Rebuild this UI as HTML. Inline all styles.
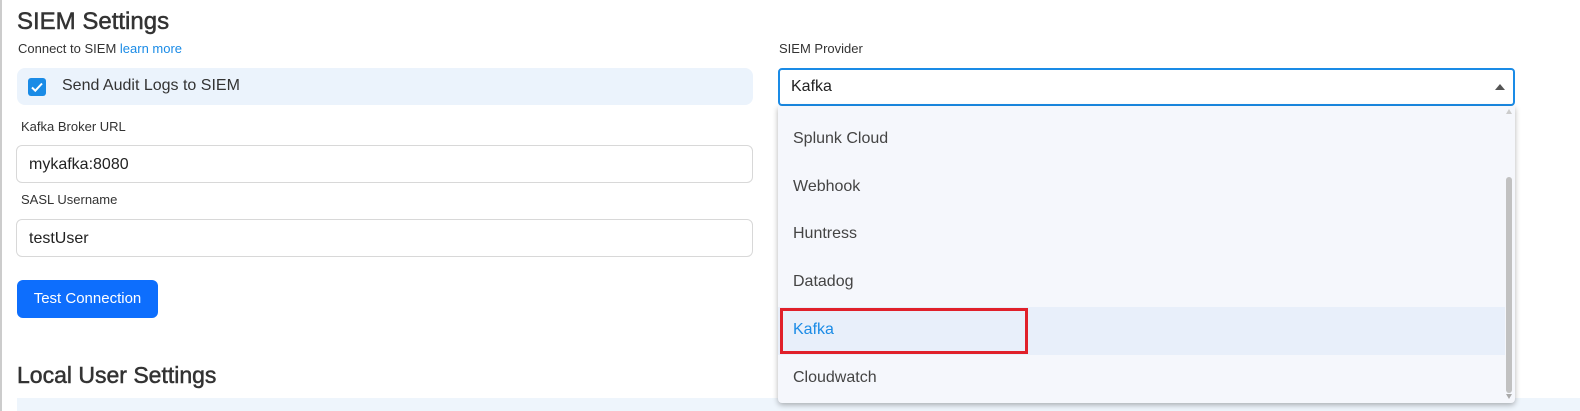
<!DOCTYPE html>
<html><head><style>
*{box-sizing:border-box;margin:0;padding:0}
body{width:1580px;height:411px;overflow:hidden;background:#fff;font-family:"Liberation Sans",sans-serif;color:#333;position:relative}
.a{position:absolute}
h1{font-size:24px;font-weight:400;color:#333;-webkit-text-stroke:0.5px #333}
.inp{border:1px solid #d8d8d8;border-radius:6px;height:38px;width:737px;left:16px;font-size:16px;padding:10px 12px;color:#222}
.lbl{font-size:13px;color:#333}
.item{position:absolute;left:0;width:727px;height:48px;font-size:16px;color:#444;padding:14px 15px}
</style></head><body>
<div class="a" style="left:0;top:0;width:2px;height:411px;background:#ccc"></div>
<h1 class="a" style="left:17px;top:8px">SIEM Settings</h1>
<div class="a lbl" style="left:18px;top:41px">Connect to SIEM <span style="color:#1a8be6">learn more</span></div>
<div class="a" style="left:17px;top:68px;width:736px;height:37px;background:#ebf3fc;border-radius:8px"></div>
<div class="a" style="left:28px;top:78px;width:18px;height:18px;background:#1a8be6;border-radius:3px">
<svg width="18" height="18"><path d="M4 9.5l3.3 3.2L14 5.5" stroke="#fff" stroke-width="2" fill="none"/></svg></div>
<div class="a" style="left:62px;top:77px;font-size:16px;color:#333">Send Audit Logs to SIEM</div>
<div class="a lbl" style="left:21px;top:119px">Kafka Broker URL</div>
<div class="a inp" style="top:145px">mykafka:8080</div>
<div class="a lbl" style="left:21px;top:192px">SASL Username</div>
<div class="a inp" style="top:219px">testUser</div>
<div class="a" style="left:17px;top:280px;width:141px;height:38px;background:#0d6efd;border-radius:6px;color:#fff;font-size:15px;text-align:center;line-height:38px">Test Connection</div>
<h1 class="a" style="left:17px;top:362px;font-size:23px">Local User Settings</h1>
<div class="a" style="left:17px;top:398px;width:1563px;height:13px;background:#eef5fc"></div>
<div class="a lbl" style="left:779px;top:41px">SIEM Provider</div>
<div class="a" style="left:778px;top:68px;width:737px;height:38px;border:2px solid #1a8be6;border-radius:4px;font-size:16px;padding:8px 11px;color:#222">Kafka
<svg class="a" style="right:8px;top:14px" width="10" height="6"><path d="M0 6L5 0L10 6Z" fill="#555"/></svg></div>
<div class="a" style="left:778px;top:106px;width:737px;height:297px;background:#f5f7fc;box-shadow:0 2px 6px rgba(0,0,0,.3);border-radius:0 0 4px 4px;overflow:hidden">
<div class="item" style="top:10px">Splunk Cloud</div>
<div class="item" style="top:58px">Webhook</div>
<div class="item" style="top:105px">Huntress</div>
<div class="item" style="top:153px">Datadog</div>
<div class="item" style="top:201px;background:#e8effa;color:#1a8be6">Kafka</div>
<div class="item" style="top:249px">Cloudwatch</div>
<div class="a" style="left:2px;top:202px;width:248px;height:46px;border:3px solid #e0202a"></div>
<div class="a" style="left:728px;top:71px;width:6px;height:216px;background:#c1c1c1;border-radius:3px"></div>
<svg class="a" style="left:728px;top:2px" width="6" height="6"><path d="M0 6L3 1L6 6Z" fill="#ccc"/></svg>
<svg class="a" style="left:728px;top:288px" width="6" height="6"><path d="M0 0L3 5L6 0Z" fill="#aaa"/></svg>
</div>
</body></html>
